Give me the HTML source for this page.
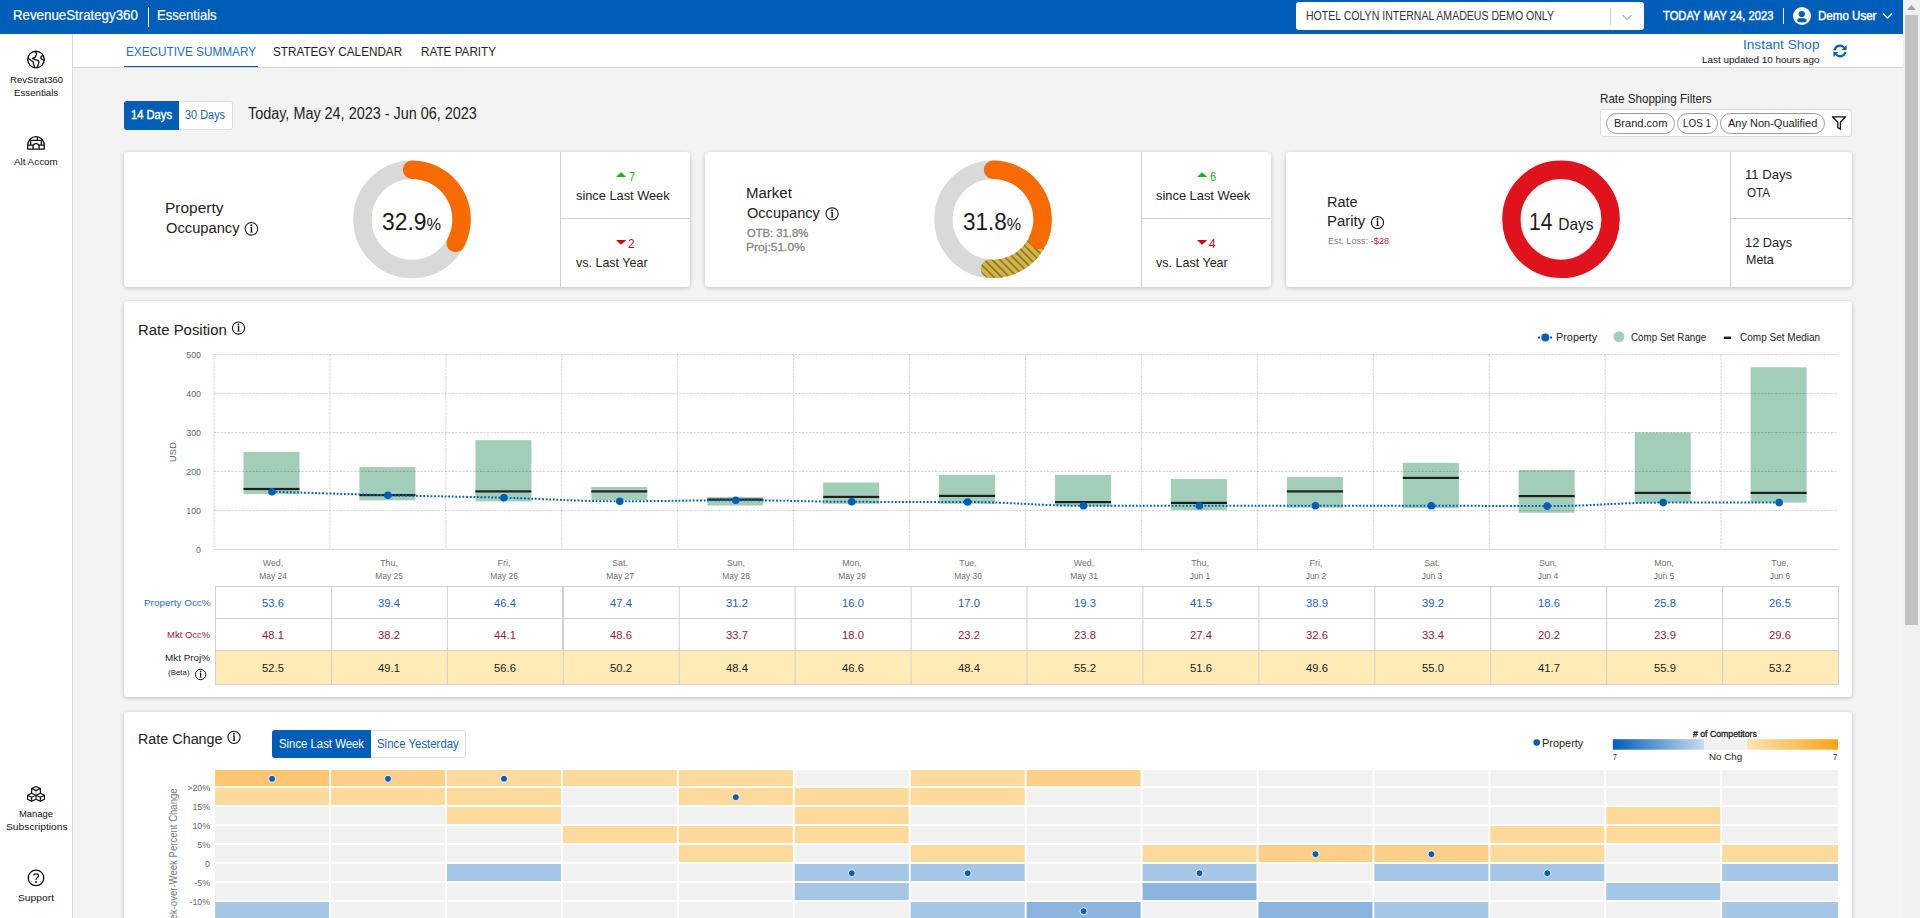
<!DOCTYPE html>
<html><head><meta charset="utf-8"><style>
html,body{margin:0;padding:0;}
body{width:1920px;height:918px;overflow:hidden;position:relative;background:#F3F3F3;font-family:"Liberation Sans",sans-serif;}
.t{position:absolute;white-space:nowrap;line-height:1;}
svg{position:absolute;left:0;top:0;}
</style></head><body>
<div style="position:absolute;left:0px;top:0px;width:1903px;height:34px;background:#005EB8;"></div>
<div style="position:absolute;left:0px;top:34px;width:73px;height:884px;background:#fff;border-right:1px solid #d9d9d9;box-sizing:border-box;"></div>
<div style="position:absolute;left:73px;top:34px;width:1830px;height:34px;background:#fff;border-bottom:1px solid #d2d2d2;box-sizing:border-box;"></div>
<div style="position:absolute;left:1903px;top:0px;width:17px;height:918px;background:#f1f1f1;"></div>
<div style="position:absolute;left:1905px;top:15px;width:13px;height:610px;background:#c1c1c1;"></div>
<div style="position:absolute;left:148px;top:7px;width:1px;height:20px;background:#fff;"></div>
<div style="position:absolute;left:1296px;top:2px;width:348px;height:28px;background:#fff;border-radius:3px;"></div>
<div style="position:absolute;left:1610px;top:8px;width:1px;height:17px;background:#ccc;"></div>
<div style="position:absolute;left:1783px;top:8px;width:1px;height:16px;background:#fff;"></div>
<div style="position:absolute;left:124px;top:65.5px;width:134px;height:1.6px;background:#005EB8;"></div>
<div style="position:absolute;left:124px;top:101px;width:109px;height:29px;background:#fff;border:1px solid #dcdcdc;border-radius:3px;box-sizing:border-box;"></div>
<div style="position:absolute;left:124px;top:101px;width:55px;height:29px;background:#005EB8;border-radius:3px 0 0 3px;"></div>
<div style="position:absolute;left:1600px;top:109px;width:252px;height:28px;background:#fff;border:1px solid #dcdcdc;border-radius:3px;box-sizing:border-box;"></div>
<div style="position:absolute;left:1606px;top:112.5px;width:69px;height:21px;background:#fff;border:1px solid #9a9a9a;border-radius:11px;box-sizing:border-box;"></div>
<div style="position:absolute;left:1676.5px;top:112.5px;width:41.5px;height:21px;background:#fff;border:1px solid #9a9a9a;border-radius:11px;box-sizing:border-box;"></div>
<div style="position:absolute;left:1719.5px;top:112.5px;width:105.0px;height:21px;background:#fff;border:1px solid #9a9a9a;border-radius:11px;box-sizing:border-box;"></div>
<div style="position:absolute;left:124px;top:152px;width:566px;height:135px;background:#fff;border-radius:4px;box-shadow:0 1px 4px rgba(0,0,0,0.22);"></div>
<div style="position:absolute;left:705px;top:152px;width:566px;height:135px;background:#fff;border-radius:4px;box-shadow:0 1px 4px rgba(0,0,0,0.22);"></div>
<div style="position:absolute;left:1286px;top:152px;width:566px;height:135px;background:#fff;border-radius:4px;box-shadow:0 1px 4px rgba(0,0,0,0.22);"></div>
<div style="position:absolute;left:560px;top:152px;width:1px;height:135px;background:#cfcfcf;"></div>
<div style="position:absolute;left:560px;top:218px;width:130px;height:1px;background:#cfcfcf;"></div>
<div style="position:absolute;left:1141px;top:152px;width:1px;height:135px;background:#cfcfcf;"></div>
<div style="position:absolute;left:1141px;top:218px;width:130px;height:1px;background:#cfcfcf;"></div>
<div style="position:absolute;left:1730px;top:152px;width:1px;height:135px;background:#cfcfcf;"></div>
<div style="position:absolute;left:1730px;top:218px;width:122px;height:1px;background:#cfcfcf;"></div>
<div style="position:absolute;left:124px;top:301px;width:1728px;height:396px;background:#fff;border-radius:4px;box-shadow:0 1px 4px rgba(0,0,0,0.22);"></div>
<div style="position:absolute;left:215px;top:650px;width:1624px;height:34px;background:#FEEBB6;"></div>
<div style="position:absolute;left:562px;top:586px;width:2px;height:64px;background:#cfcfcf;"></div>
<div style="position:absolute;left:124px;top:712px;width:1728px;height:300px;background:#fff;border-radius:4px;box-shadow:0 1px 4px rgba(0,0,0,0.22);"></div>
<div style="position:absolute;left:272px;top:730px;width:194px;height:28px;background:#fff;border:1px solid #dcdcdc;border-radius:3px;box-sizing:border-box;"></div>
<div style="position:absolute;left:272px;top:730px;width:99px;height:28px;background:#005EB8;border-radius:3px 0 0 3px;"></div>
<svg width="1920" height="918" viewBox="0 0 1920 918"><path d="M1907 10 L1911.5 5 L1916 10 Z" fill="#a3a3a3"/><path d="M1622.5 15 L1627 19.5 L1631.5 15" fill="none" stroke="#bbb" stroke-width="1.4"/><circle cx="1802" cy="16" r="9" fill="#fff"/><circle cx="1801.8" cy="14" r="3.1" fill="#005EB8"/><ellipse cx="1801.9" cy="20.3" rx="4.7" ry="2.2" fill="#005EB8"/><path d="M1883 13.4 L1887.5 18.2 L1892 13.4" fill="none" stroke="#fff" stroke-width="1.2"/><g fill="none" stroke="#111" stroke-width="1.35" stroke-linejoin="round"><circle cx="36" cy="59.5" r="8.3"/><path d="M35.4 51.3 L36.6 53.9 L35.2 57.2 L32.6 58.3 L35 59.7 L38 60.4 L39 62.1 L37.7 66.2 L36.6 67.8"/><path d="M28.2 58.3 L31.5 60.7 L33.1 61.8 L33.8 64.9 L34.9 67.6"/><path d="M43.1 55.3 Q40.3 56.6 41 58.4 Q42 59.8 44.2 60.4"/></g><g fill="none" stroke="#111" stroke-width="1.3" stroke-linejoin="round"><path d="M27.7 149.1 L27.7 145.3 A8.3 8.6 0 0 1 44.3 145.3 L44.3 149.1 Z"/><path d="M29.2 140.3 L42.8 140.3 M37.4 136.9 L37.4 140.3 M27.8 145.1 L33 145.1 M39.1 145.1 L44.2 145.1 M30.7 140.3 L30.7 145.1 M41.3 140.3 L41.3 145.1 M33 149.1 L33 146.6 A3.05 3.05 0 0 1 39.1 146.6 L39.1 149.1"/></g><g fill="none" stroke="#111" stroke-width="1.25" stroke-linejoin="round"><path d="M31.6 793.3 L31.6 788.5 L36 786.5 L40.4 788.5 L40.4 793.3 M31.6 788.5 L36 790.6 L40.4 788.5"/><path d="M27.6 795.3 L31.6 793.3 L36 795.3 L36 799.3 L31.6 801.3 L27.6 799.3 Z M27.6 795.3 L31.6 797.3 L36 795.3 M31.6 797.3 L31.6 801.3"/><path d="M36 795.3 L40.4 793.3 L44.4 795.3 L44.4 799.3 L40.4 801.3 L36 799.3 M36 795.3 L40.4 797.3 L44.4 795.3 M40.4 797.3 L40.4 801.3"/></g><path d="M36 790.8 L36 793.3 M36 795.5 L36 799.2" stroke="#888" stroke-width="1"/><circle cx="36" cy="877.9" r="7.8" fill="none" stroke="#111" stroke-width="1.3"/><path d="M33.5 875.4 Q33.9 873.9 36.1 873.9 Q38.5 873.9 38.5 875.7 Q38.5 876.9 37.1 877.8 Q36 878.6 36 880" fill="none" stroke="#111" stroke-width="1.3"/><rect x="35.2" y="881.2" width="1.7" height="1.7" fill="#111"/><g fill="none" stroke="#005EB8" stroke-width="2.2"><path d="M1834.6 50.2 A5.4 5.4 0 0 1 1843.9 47.4"/><path d="M1845.4 51.9 A5.4 5.4 0 0 1 1836.1 54.6"/></g><path d="M1846.6 44.9 L1846.6 49.9 L1841.6 49.9 Z" fill="#005EB8"/><path d="M1833.4 57.1 L1833.4 52.1 L1838.4 52.1 Z" fill="#005EB8"/><path d="M1832.4 116.8 L1845.6 116.8 L1840.4 122.3 L1840.4 129.3 L1837.8 127.6 L1837.8 122.3 Z" fill="none" stroke="#111" stroke-width="1.3" stroke-linejoin="round"/><defs><pattern id="hatch" patternUnits="userSpaceOnUse" width="5.5" height="5.5" patternTransform="rotate(-45)"><rect width="5.5" height="5.5" fill="#DDB52C"/><rect x="0" y="0" width="1.6" height="5.5" fill="#707070"/></pattern></defs><circle cx="251.4" cy="228.8" r="6.3" fill="none" stroke="#111" stroke-width="1.05"/><circle cx="251.35" cy="225.19" r="0.98" fill="#111"/><path d="M250.83 226.73 L252.17 226.73 L252.17 231.49 L253.05 232.52 L249.75 232.52 L250.73 231.49 L250.73 227.77 L250.06 227.46 Z" fill="#111"/><circle cx="412" cy="219.4" r="49.6" fill="none" stroke="#d9d9d9" stroke-width="18.4"/><path d="M412.00 169.80 A49.6 49.6 0 0 1 455.61 243.02" fill="none" stroke="#F66A00" stroke-width="18.4" stroke-linecap="round"/><path d="M616 177 L621.1 172.2 L626.2 177 Z" fill="#10b81a"/><path d="M616 240 L621.1 244.8 L626.2 240 Z" fill="#c8000f"/><circle cx="832.1" cy="213.8" r="6.1" fill="none" stroke="#111" stroke-width="1.05"/><circle cx="832.05" cy="210.30" r="0.95" fill="#111"/><path d="M831.55 211.80 L832.85 211.80 L832.85 216.40 L833.70 217.40 L830.50 217.40 L831.45 216.40 L831.45 212.80 L830.80 212.50 Z" fill="#111"/><circle cx="993" cy="219.3" r="49.6" fill="none" stroke="#d9d9d9" stroke-width="18.4"/><path d="M1041.85 227.91 A49.6 49.6 0 0 1 989.89 268.80" fill="none" stroke="url(#hatch)" stroke-width="18.4" stroke-linecap="round"/><path d="M993.00 169.70 A49.6 49.6 0 0 1 1038.14 239.85" fill="none" stroke="#F66A00" stroke-width="18.4" stroke-linecap="round"/><path d="M1197 177 L1202.1 172.2 L1207.2 177 Z" fill="#10b81a"/><path d="M1197 240 L1202.1 244.8 L1207.2 240 Z" fill="#c8000f"/><circle cx="1377.5" cy="222.5" r="6.1" fill="none" stroke="#111" stroke-width="1.05"/><circle cx="1377.45" cy="219.00" r="0.95" fill="#111"/><path d="M1376.95 220.50 L1378.25 220.50 L1378.25 225.10 L1379.10 226.10 L1375.90 226.10 L1376.85 225.10 L1376.85 221.50 L1376.20 221.20 Z" fill="#111"/><circle cx="1561" cy="219.3" r="49.6" fill="none" stroke="#E0131C" stroke-width="18.4"/><circle cx="238.5" cy="328" r="6.1" fill="none" stroke="#111" stroke-width="1.05"/><circle cx="238.45" cy="324.50" r="0.95" fill="#111"/><path d="M237.95 326.00 L239.25 326.00 L239.25 330.60 L240.10 331.60 L236.90 331.60 L237.85 330.60 L237.85 327.00 L237.20 326.70 Z" fill="#111"/><rect x="243.5" y="451.9" width="56" height="42.1" fill="#a2cdb8"/><rect x="243.5" y="487.9" width="56" height="2.2" fill="#1f1f1f"/><rect x="359.4" y="467.1" width="56" height="33.2" fill="#a2cdb8"/><rect x="359.4" y="494.0" width="56" height="2.2" fill="#1f1f1f"/><rect x="475.4" y="440.2" width="56" height="61.2" fill="#a2cdb8"/><rect x="475.4" y="490.3" width="56" height="2.2" fill="#1f1f1f"/><rect x="591.3" y="487.0" width="56" height="13.0" fill="#a2cdb8"/><rect x="591.3" y="490.3" width="56" height="2.2" fill="#1f1f1f"/><rect x="707.2" y="497.1" width="56" height="8.4" fill="#a2cdb8"/><rect x="707.2" y="498.5" width="56" height="2.2" fill="#1f1f1f"/><rect x="823.2" y="482.5" width="56" height="21.3" fill="#a2cdb8"/><rect x="823.2" y="495.8" width="56" height="2.2" fill="#1f1f1f"/><rect x="939.1" y="474.9" width="56" height="28.9" fill="#a2cdb8"/><rect x="939.1" y="494.8" width="56" height="2.2" fill="#1f1f1f"/><rect x="1055.0" y="474.9" width="56" height="31.4" fill="#a2cdb8"/><rect x="1055.0" y="501.0" width="56" height="2.2" fill="#1f1f1f"/><rect x="1170.9" y="479.0" width="56" height="31.0" fill="#a2cdb8"/><rect x="1170.9" y="501.8" width="56" height="2.2" fill="#1f1f1f"/><rect x="1286.9" y="477.0" width="56" height="30.7" fill="#a2cdb8"/><rect x="1286.9" y="490.3" width="56" height="2.2" fill="#1f1f1f"/><rect x="1402.8" y="462.8" width="56" height="45.4" fill="#a2cdb8"/><rect x="1402.8" y="476.8" width="56" height="2.2" fill="#1f1f1f"/><rect x="1518.7" y="470.0" width="56" height="42.7" fill="#a2cdb8"/><rect x="1518.7" y="495.0" width="56" height="2.2" fill="#1f1f1f"/><rect x="1634.7" y="432.4" width="56" height="70.2" fill="#a2cdb8"/><rect x="1634.7" y="491.8" width="56" height="2.2" fill="#1f1f1f"/><rect x="1750.6" y="367.3" width="56" height="135.3" fill="#a2cdb8"/><rect x="1750.6" y="491.8" width="56" height="2.2" fill="#1f1f1f"/><line x1="214" y1="510.5" x2="1838" y2="510.5" stroke="rgba(0,0,0,0.17)" stroke-width="1" stroke-dasharray="2.2,1.3"/><line x1="214" y1="471.5" x2="1838" y2="471.5" stroke="rgba(0,0,0,0.17)" stroke-width="1" stroke-dasharray="2.2,1.3"/><line x1="214" y1="432.5" x2="1838" y2="432.5" stroke="rgba(0,0,0,0.17)" stroke-width="1" stroke-dasharray="2.2,1.3"/><line x1="214" y1="393.5" x2="1838" y2="393.5" stroke="rgba(0,0,0,0.17)" stroke-width="1" stroke-dasharray="2.2,1.3"/><line x1="214" y1="354.5" x2="1838" y2="354.5" stroke="rgba(0,0,0,0.17)" stroke-width="1" stroke-dasharray="2.2,1.3"/><line x1="214.00" y1="354.4" x2="214.00" y2="549" stroke="rgba(0,0,0,0.17)" stroke-width="1" stroke-dasharray="2.6,1"/><line x1="329.93" y1="354.4" x2="329.93" y2="549" stroke="rgba(0,0,0,0.17)" stroke-width="1" stroke-dasharray="2.6,1"/><line x1="445.86" y1="354.4" x2="445.86" y2="549" stroke="rgba(0,0,0,0.17)" stroke-width="1" stroke-dasharray="2.6,1"/><line x1="561.79" y1="354.4" x2="561.79" y2="549" stroke="rgba(0,0,0,0.17)" stroke-width="1" stroke-dasharray="2.6,1"/><line x1="677.72" y1="354.4" x2="677.72" y2="549" stroke="rgba(0,0,0,0.17)" stroke-width="1" stroke-dasharray="2.6,1"/><line x1="793.65" y1="354.4" x2="793.65" y2="549" stroke="rgba(0,0,0,0.17)" stroke-width="1" stroke-dasharray="2.6,1"/><line x1="909.58" y1="354.4" x2="909.58" y2="549" stroke="rgba(0,0,0,0.17)" stroke-width="1" stroke-dasharray="2.6,1"/><line x1="1025.51" y1="354.4" x2="1025.51" y2="549" stroke="rgba(0,0,0,0.17)" stroke-width="1" stroke-dasharray="2.6,1"/><line x1="1141.44" y1="354.4" x2="1141.44" y2="549" stroke="rgba(0,0,0,0.17)" stroke-width="1" stroke-dasharray="2.6,1"/><line x1="1257.37" y1="354.4" x2="1257.37" y2="549" stroke="rgba(0,0,0,0.17)" stroke-width="1" stroke-dasharray="2.6,1"/><line x1="1373.30" y1="354.4" x2="1373.30" y2="549" stroke="rgba(0,0,0,0.17)" stroke-width="1" stroke-dasharray="2.6,1"/><line x1="1489.23" y1="354.4" x2="1489.23" y2="549" stroke="rgba(0,0,0,0.17)" stroke-width="1" stroke-dasharray="2.6,1"/><line x1="1605.16" y1="354.4" x2="1605.16" y2="549" stroke="rgba(0,0,0,0.17)" stroke-width="1" stroke-dasharray="2.6,1"/><line x1="1721.09" y1="354.4" x2="1721.09" y2="549" stroke="rgba(0,0,0,0.17)" stroke-width="1" stroke-dasharray="2.6,1"/><line x1="214" y1="549.5" x2="1838" y2="549.5" stroke="#ccd6eb" stroke-width="1"/><path d="M272.00 491.68 C272.00 491.68 341.56 493.98 387.93 495.19 C434.30 496.40 457.49 496.52 503.86 497.72 C550.23 498.93 573.42 501.23 619.79 501.23 C666.16 501.23 689.35 500.26 735.72 500.26 C782.09 500.26 805.28 501.62 851.65 501.82 C898.02 502.01 921.21 501.82 967.58 502.01 C1013.95 502.21 1037.14 505.72 1083.51 505.72 C1129.88 505.72 1153.07 505.72 1199.44 505.72 C1245.81 505.72 1269.00 505.72 1315.37 505.72 C1361.74 505.72 1384.93 505.72 1431.30 505.72 C1477.67 505.72 1500.86 506.11 1547.23 506.11 C1593.60 506.11 1616.79 502.60 1663.16 502.60 C1709.53 502.60 1779.09 502.60 1779.09 502.60" fill="none" stroke="#005DB8" stroke-width="2" stroke-dasharray="1.8,1.8"/><circle cx="272.0" cy="491.7" r="3.8" fill="#005DB8"/><circle cx="387.9" cy="495.2" r="3.8" fill="#005DB8"/><circle cx="503.9" cy="497.7" r="3.8" fill="#005DB8"/><circle cx="619.8" cy="501.2" r="3.8" fill="#005DB8"/><circle cx="735.7" cy="500.3" r="3.8" fill="#005DB8"/><circle cx="851.7" cy="501.8" r="3.8" fill="#005DB8"/><circle cx="967.6" cy="502.0" r="3.8" fill="#005DB8"/><circle cx="1083.5" cy="505.7" r="3.8" fill="#005DB8"/><circle cx="1199.4" cy="505.7" r="3.8" fill="#005DB8"/><circle cx="1315.4" cy="505.7" r="3.8" fill="#005DB8"/><circle cx="1431.3" cy="505.7" r="3.8" fill="#005DB8"/><circle cx="1547.2" cy="506.1" r="3.8" fill="#005DB8"/><circle cx="1663.2" cy="502.6" r="3.8" fill="#005DB8"/><circle cx="1779.1" cy="502.6" r="3.8" fill="#005DB8"/><line x1="1538" y1="337.5" x2="1552" y2="337.5" stroke="#0a5cb5" stroke-width="2" stroke-dasharray="2,2"/><circle cx="1545.3" cy="337.5" r="4" fill="#0a5cb5"/><circle cx="1619" cy="336.7" r="5.5" fill="#a2cdb8"/><rect x="1723.8" y="336.6" width="7.3" height="2.4" fill="#1f1f1f"/><line x1="215" y1="586.5" x2="1839" y2="586.5" stroke="#cfcfcf" stroke-width="1"/><line x1="215" y1="618.5" x2="1839" y2="618.5" stroke="#cfcfcf" stroke-width="1"/><line x1="215" y1="650.5" x2="1839" y2="650.5" stroke="#cfcfcf" stroke-width="1"/><line x1="215" y1="684.5" x2="1839" y2="684.5" stroke="#cfcfcf" stroke-width="1"/><line x1="215.5" y1="586" x2="215.5" y2="685" stroke="#cfcfcf" stroke-width="1"/><line x1="331.43" y1="586" x2="331.43" y2="685" stroke="#cfcfcf" stroke-width="1"/><line x1="447.36" y1="586" x2="447.36" y2="685" stroke="#cfcfcf" stroke-width="1"/><line x1="563.29" y1="586" x2="563.29" y2="685" stroke="#cfcfcf" stroke-width="1"/><line x1="679.22" y1="586" x2="679.22" y2="685" stroke="#cfcfcf" stroke-width="1"/><line x1="795.1500000000001" y1="586" x2="795.1500000000001" y2="685" stroke="#cfcfcf" stroke-width="1"/><line x1="911.08" y1="586" x2="911.08" y2="685" stroke="#cfcfcf" stroke-width="1"/><line x1="1027.01" y1="586" x2="1027.01" y2="685" stroke="#cfcfcf" stroke-width="1"/><line x1="1142.94" y1="586" x2="1142.94" y2="685" stroke="#cfcfcf" stroke-width="1"/><line x1="1258.8700000000001" y1="586" x2="1258.8700000000001" y2="685" stroke="#cfcfcf" stroke-width="1"/><line x1="1374.8000000000002" y1="586" x2="1374.8000000000002" y2="685" stroke="#cfcfcf" stroke-width="1"/><line x1="1490.73" y1="586" x2="1490.73" y2="685" stroke="#cfcfcf" stroke-width="1"/><line x1="1606.66" y1="586" x2="1606.66" y2="685" stroke="#cfcfcf" stroke-width="1"/><line x1="1722.5900000000001" y1="586" x2="1722.5900000000001" y2="685" stroke="#cfcfcf" stroke-width="1"/><line x1="1838.52" y1="586" x2="1838.52" y2="685" stroke="#cfcfcf" stroke-width="1"/><circle cx="200.6" cy="674.5" r="5.2" fill="none" stroke="#111" stroke-width="1"/><circle cx="200.55" cy="671.52" r="0.81" fill="#111"/><path d="M200.13 672.80 L201.24 672.80 L201.24 676.72 L201.96 677.57 L199.24 677.57 L200.05 676.72 L200.05 673.65 L199.49 673.39 Z" fill="#111"/><circle cx="234" cy="737.3" r="6.1" fill="none" stroke="#111" stroke-width="1.05"/><circle cx="233.95" cy="733.80" r="0.95" fill="#111"/><path d="M233.45 735.30 L234.75 735.30 L234.75 739.90 L235.60 740.90 L232.40 740.90 L233.35 739.90 L233.35 736.30 L232.70 736.00 Z" fill="#111"/><circle cx="1536.7" cy="742.5" r="3.3" fill="#0a5cb5"/><defs><linearGradient id="lg" x1="0" x2="1" y1="0" y2="0"><stop offset="0" stop-color="#005EB8"/><stop offset="0.405" stop-color="#c9dbef"/><stop offset="0.405" stop-color="#f0f0f0"/><stop offset="0.594" stop-color="#f0f0f0"/><stop offset="0.594" stop-color="#fde3b6"/><stop offset="1" stop-color="#ffa314"/></linearGradient></defs><rect x="1612.8" y="739.2" width="225.2" height="10.5" fill="url(#lg)"/><rect x="215.10" y="770" width="114" height="16.2" fill="#FEC672"/><rect x="215.10" y="788" width="114" height="17.1" fill="#FDD99C"/><rect x="215.10" y="807" width="114" height="17.1" fill="#F1F1F1"/><rect x="215.10" y="826" width="114" height="17.1" fill="#F1F1F1"/><rect x="215.10" y="845" width="114" height="17.1" fill="#F1F1F1"/><rect x="215.10" y="864" width="114" height="17.1" fill="#F1F1F1"/><rect x="215.10" y="883" width="114" height="17.1" fill="#F1F1F1"/><rect x="215.10" y="902" width="114" height="17.1" fill="#A6C6E5"/><circle cx="272.1" cy="778.8" r="3.5" fill="#0a5cb5" stroke="#fff" stroke-width="0.9"/><rect x="331.03" y="770" width="114" height="16.2" fill="#FDCF88"/><rect x="331.03" y="788" width="114" height="17.1" fill="#FDD99C"/><rect x="331.03" y="807" width="114" height="17.1" fill="#F1F1F1"/><rect x="331.03" y="826" width="114" height="17.1" fill="#F1F1F1"/><rect x="331.03" y="845" width="114" height="17.1" fill="#F1F1F1"/><rect x="331.03" y="864" width="114" height="17.1" fill="#F1F1F1"/><rect x="331.03" y="883" width="114" height="17.1" fill="#F1F1F1"/><rect x="331.03" y="902" width="114" height="17.1" fill="#F1F1F1"/><circle cx="388.0" cy="778.8" r="3.5" fill="#0a5cb5" stroke="#fff" stroke-width="0.9"/><rect x="446.96" y="770" width="114" height="16.2" fill="#FDD99C"/><rect x="446.96" y="788" width="114" height="17.1" fill="#FDD99C"/><rect x="446.96" y="807" width="114" height="17.1" fill="#FDD99C"/><rect x="446.96" y="826" width="114" height="17.1" fill="#F1F1F1"/><rect x="446.96" y="845" width="114" height="17.1" fill="#F1F1F1"/><rect x="446.96" y="864" width="114" height="17.1" fill="#A6C6E5"/><rect x="446.96" y="883" width="114" height="17.1" fill="#F1F1F1"/><rect x="446.96" y="902" width="114" height="17.1" fill="#F1F1F1"/><circle cx="504.0" cy="778.8" r="3.5" fill="#0a5cb5" stroke="#fff" stroke-width="0.9"/><rect x="562.89" y="770" width="114" height="16.2" fill="#FDD99C"/><rect x="562.89" y="788" width="114" height="17.1" fill="#F1F1F1"/><rect x="562.89" y="807" width="114" height="17.1" fill="#F1F1F1"/><rect x="562.89" y="826" width="114" height="17.1" fill="#FDD99C"/><rect x="562.89" y="845" width="114" height="17.1" fill="#F1F1F1"/><rect x="562.89" y="864" width="114" height="17.1" fill="#F1F1F1"/><rect x="562.89" y="883" width="114" height="17.1" fill="#F1F1F1"/><rect x="562.89" y="902" width="114" height="17.1" fill="#F1F1F1"/><rect x="678.82" y="770" width="114" height="16.2" fill="#FDD99C"/><rect x="678.82" y="788" width="114" height="17.1" fill="#FDD99C"/><rect x="678.82" y="807" width="114" height="17.1" fill="#F1F1F1"/><rect x="678.82" y="826" width="114" height="17.1" fill="#FDD99C"/><rect x="678.82" y="845" width="114" height="17.1" fill="#FDD99C"/><rect x="678.82" y="864" width="114" height="17.1" fill="#F1F1F1"/><rect x="678.82" y="883" width="114" height="17.1" fill="#F1F1F1"/><rect x="678.82" y="902" width="114" height="17.1" fill="#F1F1F1"/><circle cx="735.8" cy="797.2" r="3.5" fill="#0a5cb5" stroke="#fff" stroke-width="0.9"/><rect x="794.75" y="770" width="114" height="16.2" fill="#F1F1F1"/><rect x="794.75" y="788" width="114" height="17.1" fill="#FDD99C"/><rect x="794.75" y="807" width="114" height="17.1" fill="#FDD99C"/><rect x="794.75" y="826" width="114" height="17.1" fill="#FDD99C"/><rect x="794.75" y="845" width="114" height="17.1" fill="#F1F1F1"/><rect x="794.75" y="864" width="114" height="17.1" fill="#A6C6E5"/><rect x="794.75" y="883" width="114" height="17.1" fill="#A6C6E5"/><rect x="794.75" y="902" width="114" height="17.1" fill="#F1F1F1"/><circle cx="851.8" cy="873.2" r="3.5" fill="#0a5cb5" stroke="#fff" stroke-width="0.9"/><rect x="910.68" y="770" width="114" height="16.2" fill="#FDD99C"/><rect x="910.68" y="788" width="114" height="17.1" fill="#FDD99C"/><rect x="910.68" y="807" width="114" height="17.1" fill="#F1F1F1"/><rect x="910.68" y="826" width="114" height="17.1" fill="#F1F1F1"/><rect x="910.68" y="845" width="114" height="17.1" fill="#FDD99C"/><rect x="910.68" y="864" width="114" height="17.1" fill="#A6C6E5"/><rect x="910.68" y="883" width="114" height="17.1" fill="#F1F1F1"/><rect x="910.68" y="902" width="114" height="17.1" fill="#A6C6E5"/><circle cx="967.7" cy="873.2" r="3.5" fill="#0a5cb5" stroke="#fff" stroke-width="0.9"/><rect x="1026.61" y="770" width="114" height="16.2" fill="#FDCF88"/><rect x="1026.61" y="788" width="114" height="17.1" fill="#F1F1F1"/><rect x="1026.61" y="807" width="114" height="17.1" fill="#F1F1F1"/><rect x="1026.61" y="826" width="114" height="17.1" fill="#F1F1F1"/><rect x="1026.61" y="845" width="114" height="17.1" fill="#F1F1F1"/><rect x="1026.61" y="864" width="114" height="17.1" fill="#F1F1F1"/><rect x="1026.61" y="883" width="114" height="17.1" fill="#F1F1F1"/><rect x="1026.61" y="902" width="114" height="17.1" fill="#8BB4DE"/><circle cx="1083.6" cy="911.2" r="3.5" fill="#0a5cb5" stroke="#fff" stroke-width="0.9"/><rect x="1142.54" y="770" width="114" height="16.2" fill="#F1F1F1"/><rect x="1142.54" y="788" width="114" height="17.1" fill="#F1F1F1"/><rect x="1142.54" y="807" width="114" height="17.1" fill="#F1F1F1"/><rect x="1142.54" y="826" width="114" height="17.1" fill="#F1F1F1"/><rect x="1142.54" y="845" width="114" height="17.1" fill="#FDD99C"/><rect x="1142.54" y="864" width="114" height="17.1" fill="#A6C6E5"/><rect x="1142.54" y="883" width="114" height="17.1" fill="#8BB4DE"/><rect x="1142.54" y="902" width="114" height="17.1" fill="#F1F1F1"/><circle cx="1199.5" cy="873.2" r="3.5" fill="#0a5cb5" stroke="#fff" stroke-width="0.9"/><rect x="1258.47" y="770" width="114" height="16.2" fill="#F1F1F1"/><rect x="1258.47" y="788" width="114" height="17.1" fill="#F1F1F1"/><rect x="1258.47" y="807" width="114" height="17.1" fill="#F1F1F1"/><rect x="1258.47" y="826" width="114" height="17.1" fill="#F1F1F1"/><rect x="1258.47" y="845" width="114" height="17.1" fill="#FDCF88"/><rect x="1258.47" y="864" width="114" height="17.1" fill="#F1F1F1"/><rect x="1258.47" y="883" width="114" height="17.1" fill="#F1F1F1"/><rect x="1258.47" y="902" width="114" height="17.1" fill="#8BB4DE"/><circle cx="1315.5" cy="854.2" r="3.5" fill="#0a5cb5" stroke="#fff" stroke-width="0.9"/><rect x="1374.40" y="770" width="114" height="16.2" fill="#F1F1F1"/><rect x="1374.40" y="788" width="114" height="17.1" fill="#F1F1F1"/><rect x="1374.40" y="807" width="114" height="17.1" fill="#F1F1F1"/><rect x="1374.40" y="826" width="114" height="17.1" fill="#F1F1F1"/><rect x="1374.40" y="845" width="114" height="17.1" fill="#FDCF88"/><rect x="1374.40" y="864" width="114" height="17.1" fill="#A6C6E5"/><rect x="1374.40" y="883" width="114" height="17.1" fill="#F1F1F1"/><rect x="1374.40" y="902" width="114" height="17.1" fill="#A6C6E5"/><circle cx="1431.4" cy="854.2" r="3.5" fill="#0a5cb5" stroke="#fff" stroke-width="0.9"/><rect x="1490.33" y="770" width="114" height="16.2" fill="#F1F1F1"/><rect x="1490.33" y="788" width="114" height="17.1" fill="#F1F1F1"/><rect x="1490.33" y="807" width="114" height="17.1" fill="#F1F1F1"/><rect x="1490.33" y="826" width="114" height="17.1" fill="#FDD99C"/><rect x="1490.33" y="845" width="114" height="17.1" fill="#FDD99C"/><rect x="1490.33" y="864" width="114" height="17.1" fill="#A6C6E5"/><rect x="1490.33" y="883" width="114" height="17.1" fill="#F1F1F1"/><rect x="1490.33" y="902" width="114" height="17.1" fill="#F1F1F1"/><circle cx="1547.3" cy="873.2" r="3.5" fill="#0a5cb5" stroke="#fff" stroke-width="0.9"/><rect x="1606.26" y="770" width="114" height="16.2" fill="#F1F1F1"/><rect x="1606.26" y="788" width="114" height="17.1" fill="#F1F1F1"/><rect x="1606.26" y="807" width="114" height="17.1" fill="#FDD99C"/><rect x="1606.26" y="826" width="114" height="17.1" fill="#FDD99C"/><rect x="1606.26" y="845" width="114" height="17.1" fill="#F1F1F1"/><rect x="1606.26" y="864" width="114" height="17.1" fill="#F1F1F1"/><rect x="1606.26" y="883" width="114" height="17.1" fill="#A6C6E5"/><rect x="1606.26" y="902" width="114" height="17.1" fill="#F1F1F1"/><rect x="1722.19" y="770" width="115.8" height="16.2" fill="#F1F1F1"/><rect x="1722.19" y="788" width="115.8" height="17.1" fill="#F1F1F1"/><rect x="1722.19" y="807" width="115.8" height="17.1" fill="#F1F1F1"/><rect x="1722.19" y="826" width="115.8" height="17.1" fill="#F1F1F1"/><rect x="1722.19" y="845" width="115.8" height="17.1" fill="#FDD99C"/><rect x="1722.19" y="864" width="115.8" height="17.1" fill="#A6C6E5"/><rect x="1722.19" y="883" width="115.8" height="17.1" fill="#F1F1F1"/><rect x="1722.19" y="902" width="115.8" height="17.1" fill="#A6C6E5"/></svg>
<div class="t" style="top:9.00px;font-size:13.8px;color:#fff;left:13.44px;transform:scaleX(0.9628);transform-origin:0 0;-webkit-text-stroke:0.2px #fff;">RevenueStrategy360</div>
<div class="t" style="top:9.00px;font-size:13.8px;color:#fff;left:156.55px;transform:scaleX(0.9484);transform-origin:0 0;-webkit-text-stroke:0.2px #fff;">Essentials</div>
<div class="t" style="top:9.00px;font-size:13px;color:#333;left:1305.69px;transform:scaleX(0.8115);transform-origin:0 0;">HOTEL COLYN INTERNAL AMADEUS DEMO ONLY</div>
<div class="t" style="top:9.00px;font-size:13px;color:#fff;left:1662.90px;transform:scaleX(0.8617);transform-origin:0 0;-webkit-text-stroke:0.45px #fff;">TODAY MAY 24, 2023</div>
<div class="t" style="top:9.00px;font-size:13px;color:#fff;left:1817.71px;transform:scaleX(0.8892);transform-origin:0 0;-webkit-text-stroke:0.45px #fff;">Demo User</div>
<div class="t" style="top:75.00px;font-size:9.9px;color:#111;left:9.75px;transform:scaleX(0.9682);transform-origin:0 0;">RevStrat360</div>
<div class="t" style="top:88.00px;font-size:9.9px;color:#111;left:14.10px;transform:scaleX(0.9822);transform-origin:0 0;">Essentials</div>
<div class="t" style="top:157.00px;font-size:9.9px;color:#111;left:13.90px;transform:scaleX(1.0000);transform-origin:0 0;">Alt Accom</div>
<div class="t" style="top:809.00px;font-size:9.9px;color:#111;left:18.80px;transform:scaleX(0.9556);transform-origin:0 0;">Manage</div>
<div class="t" style="top:822.00px;font-size:9.9px;color:#111;left:5.60px;transform:scaleX(1.0390);transform-origin:0 0;">Subscriptions</div>
<div class="t" style="top:893.00px;font-size:9.9px;color:#111;left:17.90px;transform:scaleX(1.0429);transform-origin:0 0;">Support</div>
<div class="t" style="top:45.00px;font-size:13px;color:#1d6ec6;left:125.79px;transform:scaleX(0.9063);transform-origin:0 0;">EXECUTIVE SUMMARY</div>
<div class="t" style="top:45.00px;font-size:13px;color:#222;left:273.10px;transform:scaleX(0.9014);transform-origin:0 0;">STRATEGY CALENDAR</div>
<div class="t" style="top:45.00px;font-size:13px;color:#222;left:420.60px;transform:scaleX(0.9012);transform-origin:0 0;">RATE PARITY</div>
<div class="t" style="top:39.00px;font-size:12.2px;color:#1d6ec6;left:1743.08px;transform:scaleX(1.1179);transform-origin:0 0;">Instant Shop</div>
<div class="t" style="top:55.00px;font-size:9.9px;color:#111;left:1702.00px;transform:scaleX(1.0000);transform-origin:0 0;">Last updated 10 hours ago</div>
<div class="t" style="top:109.00px;font-size:12.5px;color:#fff;left:130.81px;transform:scaleX(0.8933);transform-origin:0 0;-webkit-text-stroke:0.4px #fff;">14 Days</div>
<div class="t" style="top:109.00px;font-size:12.5px;color:#1d5fb0;left:185.40px;transform:scaleX(0.8739);transform-origin:0 0;">30 Days</div>
<div class="t" style="top:106.00px;font-size:16px;color:#222;left:248.00px;transform:scaleX(0.9004);transform-origin:0 0;">Today, May 24, 2023 - Jun 06, 2023</div>
<div class="t" style="top:92.00px;font-size:13px;color:#222;left:1600.41px;transform:scaleX(0.8927);transform-origin:0 0;">Rate Shopping Filters</div>
<div class="t" style="top:118.00px;font-size:11.8px;color:#222;left:1613.66px;transform:scaleX(0.9357);transform-origin:0 0;">Brand.com</div>
<div class="t" style="top:118.00px;font-size:11.8px;color:#222;left:1683.36px;transform:scaleX(0.8375);transform-origin:0 0;">LOS 1</div>
<div class="t" style="top:118.00px;font-size:11.8px;color:#222;left:1727.80px;transform:scaleX(0.9326);transform-origin:0 0;">Any Non-Qualified</div>
<div class="t" style="top:200.00px;font-size:15.5px;color:#222;left:165.30px;transform:scaleX(0.9983);transform-origin:0 0;">Property</div>
<div class="t" style="top:220.00px;font-size:15.5px;color:#222;left:165.70px;transform:scaleX(0.9487);transform-origin:0 0;">Occupancy</div>
<div class="t" style="top:211.00px;font-size:23px;color:#1a1a1a;left:381.81px;transform:scaleX(0.9931);transform-origin:0 0;">32.9<span style="font-size:16.5px">%</span></div>
<div class="t" style="top:171.00px;font-size:12.8px;color:#10b81a;left:628.50px;transform:scaleX(0.8571);transform-origin:0 0;">7</div>
<div class="t" style="top:238.00px;font-size:12.8px;color:#c8000f;left:628.00px;transform:scaleX(0.9286);transform-origin:0 0;">2</div>
<div class="t" style="top:189.00px;font-size:13px;color:#222;left:575.60px;transform:scaleX(0.9842);transform-origin:0 0;">since Last Week</div>
<div class="t" style="top:256.00px;font-size:13px;color:#222;left:575.60px;transform:scaleX(0.9613);transform-origin:0 0;">vs. Last Year</div>
<div class="t" style="top:185.00px;font-size:15.5px;color:#222;left:746.03px;transform:scaleX(0.9681);transform-origin:0 0;">Market</div>
<div class="t" style="top:205.00px;font-size:15.5px;color:#222;left:747.00px;transform:scaleX(0.9397);transform-origin:0 0;">Occupancy</div>
<div class="t" style="top:228.00px;font-size:11.8px;color:#888;left:747.00px;transform:scaleX(0.9516);transform-origin:0 0;-webkit-text-stroke:0.35px #888;">OTB: 31.8%</div>
<div class="t" style="top:242.00px;font-size:11.8px;color:#888;left:745.98px;transform:scaleX(1.0193);transform-origin:0 0;-webkit-text-stroke:0.35px #888;">Proj:51.0%</div>
<div class="t" style="top:211.00px;font-size:23px;color:#1a1a1a;left:963.32px;transform:scaleX(0.9776);transform-origin:0 0;">31.8<span style="font-size:16.5px">%</span></div>
<div class="t" style="top:171.00px;font-size:12.8px;color:#10b81a;left:1209.50px;transform:scaleX(0.8571);transform-origin:0 0;">6</div>
<div class="t" style="top:238.00px;font-size:12.8px;color:#c8000f;left:1209.00px;transform:scaleX(0.9286);transform-origin:0 0;">4</div>
<div class="t" style="top:189.00px;font-size:13px;color:#222;left:1156.00px;transform:scaleX(0.9895);transform-origin:0 0;">since Last Week</div>
<div class="t" style="top:256.00px;font-size:13px;color:#222;left:1156.00px;transform:scaleX(0.9640);transform-origin:0 0;">vs. Last Year</div>
<div class="t" style="top:194.00px;font-size:15.5px;color:#222;left:1327.17px;transform:scaleX(0.9323);transform-origin:0 0;">Rate</div>
<div class="t" style="top:213.00px;font-size:15.5px;color:#222;left:1327.14px;transform:scaleX(0.9641);transform-origin:0 0;">Parity</div>
<div class="t" style="top:236.00px;font-size:9.9px;color:#808080;left:1328.10px;transform:scaleX(0.9273);transform-origin:0 0;">Est. Loss: <span style="color:#e0142b">-$28</span></div>
<div class="t" style="top:211.00px;font-size:23px;color:#1a1a1a;left:1528.69px;transform:scaleX(0.9129);transform-origin:0 0;">14 <span style="font-size:17px">Days</span></div>
<div class="t" style="top:169.00px;font-size:12.7px;color:#222;left:1745.47px;transform:scaleX(1.0341);transform-origin:0 0;">11 Days</div>
<div class="t" style="top:187.00px;font-size:12.7px;color:#222;left:1746.50px;transform:scaleX(0.9160);transform-origin:0 0;">OTA</div>
<div class="t" style="top:237.00px;font-size:12.7px;color:#222;left:1745.49px;transform:scaleX(1.0111);transform-origin:0 0;">12 Days</div>
<div class="t" style="top:254.00px;font-size:12.7px;color:#222;left:1745.52px;transform:scaleX(0.9821);transform-origin:0 0;">Meta</div>
<div class="t" style="top:322.00px;font-size:15.5px;color:#222;left:138.04px;transform:scaleX(0.9626);transform-origin:0 0;">Rate Position</div>
<div class="t" style="top:546.00px;font-size:8.8px;color:#666;right:1719px;">0</div>
<div class="t" style="top:507.00px;font-size:8.8px;color:#666;right:1719px;">100</div>
<div class="t" style="top:468.00px;font-size:8.8px;color:#666;right:1719px;">200</div>
<div class="t" style="top:429.00px;font-size:8.8px;color:#666;right:1719px;">300</div>
<div class="t" style="top:390.00px;font-size:8.8px;color:#666;right:1719px;">400</div>
<div class="t" style="top:351.00px;font-size:8.8px;color:#666;right:1719px;">500</div>
<div class="t" style="left:173.7px;top:451.8px;font-size:9.2px;color:#666;transform:translate(-50%,-50%) rotate(-90deg);letter-spacing:0.2px">USD</div>
<div class="t" style="top:558.00px;font-size:9.6px;color:#707070;left:272.6px;transform:translateX(-50%) scaleX(0.92);">Wed,</div>
<div class="t" style="top:571.00px;font-size:9.6px;color:#707070;left:272.6px;transform:translateX(-50%) scaleX(0.88);">May 24</div>
<div class="t" style="top:558.00px;font-size:9.6px;color:#707070;left:388.53000000000003px;transform:translateX(-50%) scaleX(0.92);">Thu,</div>
<div class="t" style="top:571.00px;font-size:9.6px;color:#707070;left:388.53000000000003px;transform:translateX(-50%) scaleX(0.88);">May 25</div>
<div class="t" style="top:558.00px;font-size:9.6px;color:#707070;left:504.46000000000004px;transform:translateX(-50%) scaleX(0.92);">Fri,</div>
<div class="t" style="top:571.00px;font-size:9.6px;color:#707070;left:504.46000000000004px;transform:translateX(-50%) scaleX(0.88);">May 26</div>
<div class="t" style="top:558.00px;font-size:9.6px;color:#707070;left:620.3900000000001px;transform:translateX(-50%) scaleX(0.92);">Sat,</div>
<div class="t" style="top:571.00px;font-size:9.6px;color:#707070;left:620.3900000000001px;transform:translateX(-50%) scaleX(0.88);">May 27</div>
<div class="t" style="top:558.00px;font-size:9.6px;color:#707070;left:736.32px;transform:translateX(-50%) scaleX(0.92);">Sun,</div>
<div class="t" style="top:571.00px;font-size:9.6px;color:#707070;left:736.32px;transform:translateX(-50%) scaleX(0.88);">May 28</div>
<div class="t" style="top:558.00px;font-size:9.6px;color:#707070;left:852.2500000000001px;transform:translateX(-50%) scaleX(0.92);">Mon,</div>
<div class="t" style="top:571.00px;font-size:9.6px;color:#707070;left:852.2500000000001px;transform:translateX(-50%) scaleX(0.88);">May 29</div>
<div class="t" style="top:558.00px;font-size:9.6px;color:#707070;left:968.1800000000001px;transform:translateX(-50%) scaleX(0.92);">Tue,</div>
<div class="t" style="top:571.00px;font-size:9.6px;color:#707070;left:968.1800000000001px;transform:translateX(-50%) scaleX(0.88);">May 30</div>
<div class="t" style="top:558.00px;font-size:9.6px;color:#707070;left:1084.1100000000001px;transform:translateX(-50%) scaleX(0.92);">Wed,</div>
<div class="t" style="top:571.00px;font-size:9.6px;color:#707070;left:1084.1100000000001px;transform:translateX(-50%) scaleX(0.88);">May 31</div>
<div class="t" style="top:558.00px;font-size:9.6px;color:#707070;left:1200.04px;transform:translateX(-50%) scaleX(0.92);">Thu,</div>
<div class="t" style="top:571.00px;font-size:9.6px;color:#707070;left:1200.04px;transform:translateX(-50%) scaleX(0.88);">Jun 1</div>
<div class="t" style="top:558.00px;font-size:9.6px;color:#707070;left:1315.9700000000003px;transform:translateX(-50%) scaleX(0.92);">Fri,</div>
<div class="t" style="top:571.00px;font-size:9.6px;color:#707070;left:1315.9700000000003px;transform:translateX(-50%) scaleX(0.88);">Jun 2</div>
<div class="t" style="top:558.00px;font-size:9.6px;color:#707070;left:1431.9px;transform:translateX(-50%) scaleX(0.92);">Sat,</div>
<div class="t" style="top:571.00px;font-size:9.6px;color:#707070;left:1431.9px;transform:translateX(-50%) scaleX(0.88);">Jun 3</div>
<div class="t" style="top:558.00px;font-size:9.6px;color:#707070;left:1547.83px;transform:translateX(-50%) scaleX(0.92);">Sun,</div>
<div class="t" style="top:571.00px;font-size:9.6px;color:#707070;left:1547.83px;transform:translateX(-50%) scaleX(0.88);">Jun 4</div>
<div class="t" style="top:558.00px;font-size:9.6px;color:#707070;left:1663.7600000000002px;transform:translateX(-50%) scaleX(0.92);">Mon,</div>
<div class="t" style="top:571.00px;font-size:9.6px;color:#707070;left:1663.7600000000002px;transform:translateX(-50%) scaleX(0.88);">Jun 5</div>
<div class="t" style="top:558.00px;font-size:9.6px;color:#707070;left:1779.69px;transform:translateX(-50%) scaleX(0.92);">Tue,</div>
<div class="t" style="top:571.00px;font-size:9.6px;color:#707070;left:1779.69px;transform:translateX(-50%) scaleX(0.88);">Jun 6</div>
<div class="t" style="top:333.00px;font-size:10px;color:#222;left:1556.21px;transform:scaleX(1.0865);transform-origin:0 0;">Property</div>
<div class="t" style="top:333.00px;font-size:10px;color:#222;left:1630.80px;transform:scaleX(0.9805);transform-origin:0 0;">Comp Set Range</div>
<div class="t" style="top:333.00px;font-size:10px;color:#222;left:1740.20px;transform:scaleX(1.0012);transform-origin:0 0;">Comp Set Median</div>
<div class="t" style="top:598.00px;font-size:11.8px;color:#1d5fae;left:273.4px;transform:translateX(-50%) scaleX(0.95);">53.6</div>
<div class="t" style="top:630.00px;font-size:11.8px;color:#8c1b47;left:273.4px;transform:translateX(-50%) scaleX(0.95);">48.1</div>
<div class="t" style="top:663.00px;font-size:11.8px;color:#222;left:273.4px;transform:translateX(-50%) scaleX(0.95);">52.5</div>
<div class="t" style="top:598.00px;font-size:11.8px;color:#1d5fae;left:389.33px;transform:translateX(-50%) scaleX(0.95);">39.4</div>
<div class="t" style="top:630.00px;font-size:11.8px;color:#8c1b47;left:389.33px;transform:translateX(-50%) scaleX(0.95);">38.2</div>
<div class="t" style="top:663.00px;font-size:11.8px;color:#222;left:389.33px;transform:translateX(-50%) scaleX(0.95);">49.1</div>
<div class="t" style="top:598.00px;font-size:11.8px;color:#1d5fae;left:505.26px;transform:translateX(-50%) scaleX(0.95);">46.4</div>
<div class="t" style="top:630.00px;font-size:11.8px;color:#8c1b47;left:505.26px;transform:translateX(-50%) scaleX(0.95);">44.1</div>
<div class="t" style="top:663.00px;font-size:11.8px;color:#222;left:505.26px;transform:translateX(-50%) scaleX(0.95);">56.6</div>
<div class="t" style="top:598.00px;font-size:11.8px;color:#1d5fae;left:621.19px;transform:translateX(-50%) scaleX(0.95);">47.4</div>
<div class="t" style="top:630.00px;font-size:11.8px;color:#8c1b47;left:621.19px;transform:translateX(-50%) scaleX(0.95);">48.6</div>
<div class="t" style="top:663.00px;font-size:11.8px;color:#222;left:621.19px;transform:translateX(-50%) scaleX(0.95);">50.2</div>
<div class="t" style="top:598.00px;font-size:11.8px;color:#1d5fae;left:737.12px;transform:translateX(-50%) scaleX(0.95);">31.2</div>
<div class="t" style="top:630.00px;font-size:11.8px;color:#8c1b47;left:737.12px;transform:translateX(-50%) scaleX(0.95);">33.7</div>
<div class="t" style="top:663.00px;font-size:11.8px;color:#222;left:737.12px;transform:translateX(-50%) scaleX(0.95);">48.4</div>
<div class="t" style="top:598.00px;font-size:11.8px;color:#1d5fae;left:853.0500000000001px;transform:translateX(-50%) scaleX(0.95);">16.0</div>
<div class="t" style="top:630.00px;font-size:11.8px;color:#8c1b47;left:853.0500000000001px;transform:translateX(-50%) scaleX(0.95);">18.0</div>
<div class="t" style="top:663.00px;font-size:11.8px;color:#222;left:853.0500000000001px;transform:translateX(-50%) scaleX(0.95);">46.6</div>
<div class="t" style="top:598.00px;font-size:11.8px;color:#1d5fae;left:968.98px;transform:translateX(-50%) scaleX(0.95);">17.0</div>
<div class="t" style="top:630.00px;font-size:11.8px;color:#8c1b47;left:968.98px;transform:translateX(-50%) scaleX(0.95);">23.2</div>
<div class="t" style="top:663.00px;font-size:11.8px;color:#222;left:968.98px;transform:translateX(-50%) scaleX(0.95);">48.4</div>
<div class="t" style="top:598.00px;font-size:11.8px;color:#1d5fae;left:1084.9099999999999px;transform:translateX(-50%) scaleX(0.95);">19.3</div>
<div class="t" style="top:630.00px;font-size:11.8px;color:#8c1b47;left:1084.9099999999999px;transform:translateX(-50%) scaleX(0.95);">23.8</div>
<div class="t" style="top:663.00px;font-size:11.8px;color:#222;left:1084.9099999999999px;transform:translateX(-50%) scaleX(0.95);">55.2</div>
<div class="t" style="top:598.00px;font-size:11.8px;color:#1d5fae;left:1200.8400000000001px;transform:translateX(-50%) scaleX(0.95);">41.5</div>
<div class="t" style="top:630.00px;font-size:11.8px;color:#8c1b47;left:1200.8400000000001px;transform:translateX(-50%) scaleX(0.95);">27.4</div>
<div class="t" style="top:663.00px;font-size:11.8px;color:#222;left:1200.8400000000001px;transform:translateX(-50%) scaleX(0.95);">51.6</div>
<div class="t" style="top:598.00px;font-size:11.8px;color:#1d5fae;left:1316.77px;transform:translateX(-50%) scaleX(0.95);">38.9</div>
<div class="t" style="top:630.00px;font-size:11.8px;color:#8c1b47;left:1316.77px;transform:translateX(-50%) scaleX(0.95);">32.6</div>
<div class="t" style="top:663.00px;font-size:11.8px;color:#222;left:1316.77px;transform:translateX(-50%) scaleX(0.95);">49.6</div>
<div class="t" style="top:598.00px;font-size:11.8px;color:#1d5fae;left:1432.7000000000003px;transform:translateX(-50%) scaleX(0.95);">39.2</div>
<div class="t" style="top:630.00px;font-size:11.8px;color:#8c1b47;left:1432.7000000000003px;transform:translateX(-50%) scaleX(0.95);">33.4</div>
<div class="t" style="top:663.00px;font-size:11.8px;color:#222;left:1432.7000000000003px;transform:translateX(-50%) scaleX(0.95);">55.0</div>
<div class="t" style="top:598.00px;font-size:11.8px;color:#1d5fae;left:1548.63px;transform:translateX(-50%) scaleX(0.95);">18.6</div>
<div class="t" style="top:630.00px;font-size:11.8px;color:#8c1b47;left:1548.63px;transform:translateX(-50%) scaleX(0.95);">20.2</div>
<div class="t" style="top:663.00px;font-size:11.8px;color:#222;left:1548.63px;transform:translateX(-50%) scaleX(0.95);">41.7</div>
<div class="t" style="top:598.00px;font-size:11.8px;color:#1d5fae;left:1664.56px;transform:translateX(-50%) scaleX(0.95);">25.8</div>
<div class="t" style="top:630.00px;font-size:11.8px;color:#8c1b47;left:1664.56px;transform:translateX(-50%) scaleX(0.95);">23.9</div>
<div class="t" style="top:663.00px;font-size:11.8px;color:#222;left:1664.56px;transform:translateX(-50%) scaleX(0.95);">55.9</div>
<div class="t" style="top:598.00px;font-size:11.8px;color:#1d5fae;left:1780.4900000000002px;transform:translateX(-50%) scaleX(0.95);">26.5</div>
<div class="t" style="top:630.00px;font-size:11.8px;color:#8c1b47;left:1780.4900000000002px;transform:translateX(-50%) scaleX(0.95);">29.6</div>
<div class="t" style="top:663.00px;font-size:11.8px;color:#222;left:1780.4900000000002px;transform:translateX(-50%) scaleX(0.95);">53.2</div>
<div class="t" style="top:598.00px;font-size:9.9px;color:#1d6ec6;left:144.00px;transform:scaleX(1.0030);transform-origin:0 0;">Property Occ%</div>
<div class="t" style="top:630.00px;font-size:9.9px;color:#8c1b47;left:166.90px;transform:scaleX(0.9622);transform-origin:0 0;">Mkt Occ%</div>
<div class="t" style="top:653.00px;font-size:9.9px;color:#222;left:165.10px;transform:scaleX(1.0022);transform-origin:0 0;">Mkt Proj%</div>
<div class="t" style="top:669.00px;font-size:7.2px;color:#222;left:168.10px;transform:scaleX(1.1000);transform-origin:0 0;">(Beta)</div>
<div class="t" style="top:731.00px;font-size:15.5px;color:#222;left:137.77px;transform:scaleX(0.9256);transform-origin:0 0;">Rate Change</div>
<div class="t" style="top:737.00px;font-size:13px;color:#fff;left:279.13px;transform:scaleX(0.8729);transform-origin:0 0;">Since Last Week</div>
<div class="t" style="top:737.00px;font-size:13px;color:#1d5fb0;left:377.22px;transform:scaleX(0.8772);transform-origin:0 0;">Since Yesterday</div>
<div class="t" style="top:739.00px;font-size:10px;color:#222;left:1542.21px;transform:scaleX(1.0919);transform-origin:0 0;">Property</div>
<div class="t" style="top:730.00px;font-size:8.3px;color:#222;left:1693.00px;transform:scaleX(1.0492);transform-origin:0 0;-webkit-text-stroke:0.3px #222;"># of Competitors</div>
<div class="t" style="top:753.00px;font-size:9.2px;color:#222;left:1613.30px;transform:scaleX(0.7400);transform-origin:0 0;">7</div>
<div class="t" style="top:753.00px;font-size:9.2px;color:#222;left:1708.80px;transform:scaleX(1.0613);transform-origin:0 0;">No Chg</div>
<div class="t" style="top:753.00px;font-size:9.2px;color:#222;left:1832.50px;transform:scaleX(0.8400);transform-origin:0 0;">7</div>
<div class="t" style="top:784.00px;font-size:8.8px;color:#666;right:1710px;">&gt;20%</div>
<div class="t" style="top:803.00px;font-size:8.8px;color:#666;right:1710px;">15%</div>
<div class="t" style="top:822.00px;font-size:8.8px;color:#666;right:1710px;">10%</div>
<div class="t" style="top:841.00px;font-size:8.8px;color:#666;right:1710px;">5%</div>
<div class="t" style="top:860.00px;font-size:8.8px;color:#666;right:1710px;">0</div>
<div class="t" style="top:879.00px;font-size:8.8px;color:#666;right:1710px;">-5%</div>
<div class="t" style="top:898.00px;font-size:8.8px;color:#666;right:1710px;">-10%</div>
<div class="t" style="top:917.00px;font-size:8.8px;color:#666;right:1710px;">-15%</div>
<div class="t" style="left:173.5px;top:861px;font-size:10.4px;color:#777;transform:translate(-50%,-50%) rotate(-90deg) scaleX(0.92);">Week-over-Week Percent Change</div>
</body></html>
